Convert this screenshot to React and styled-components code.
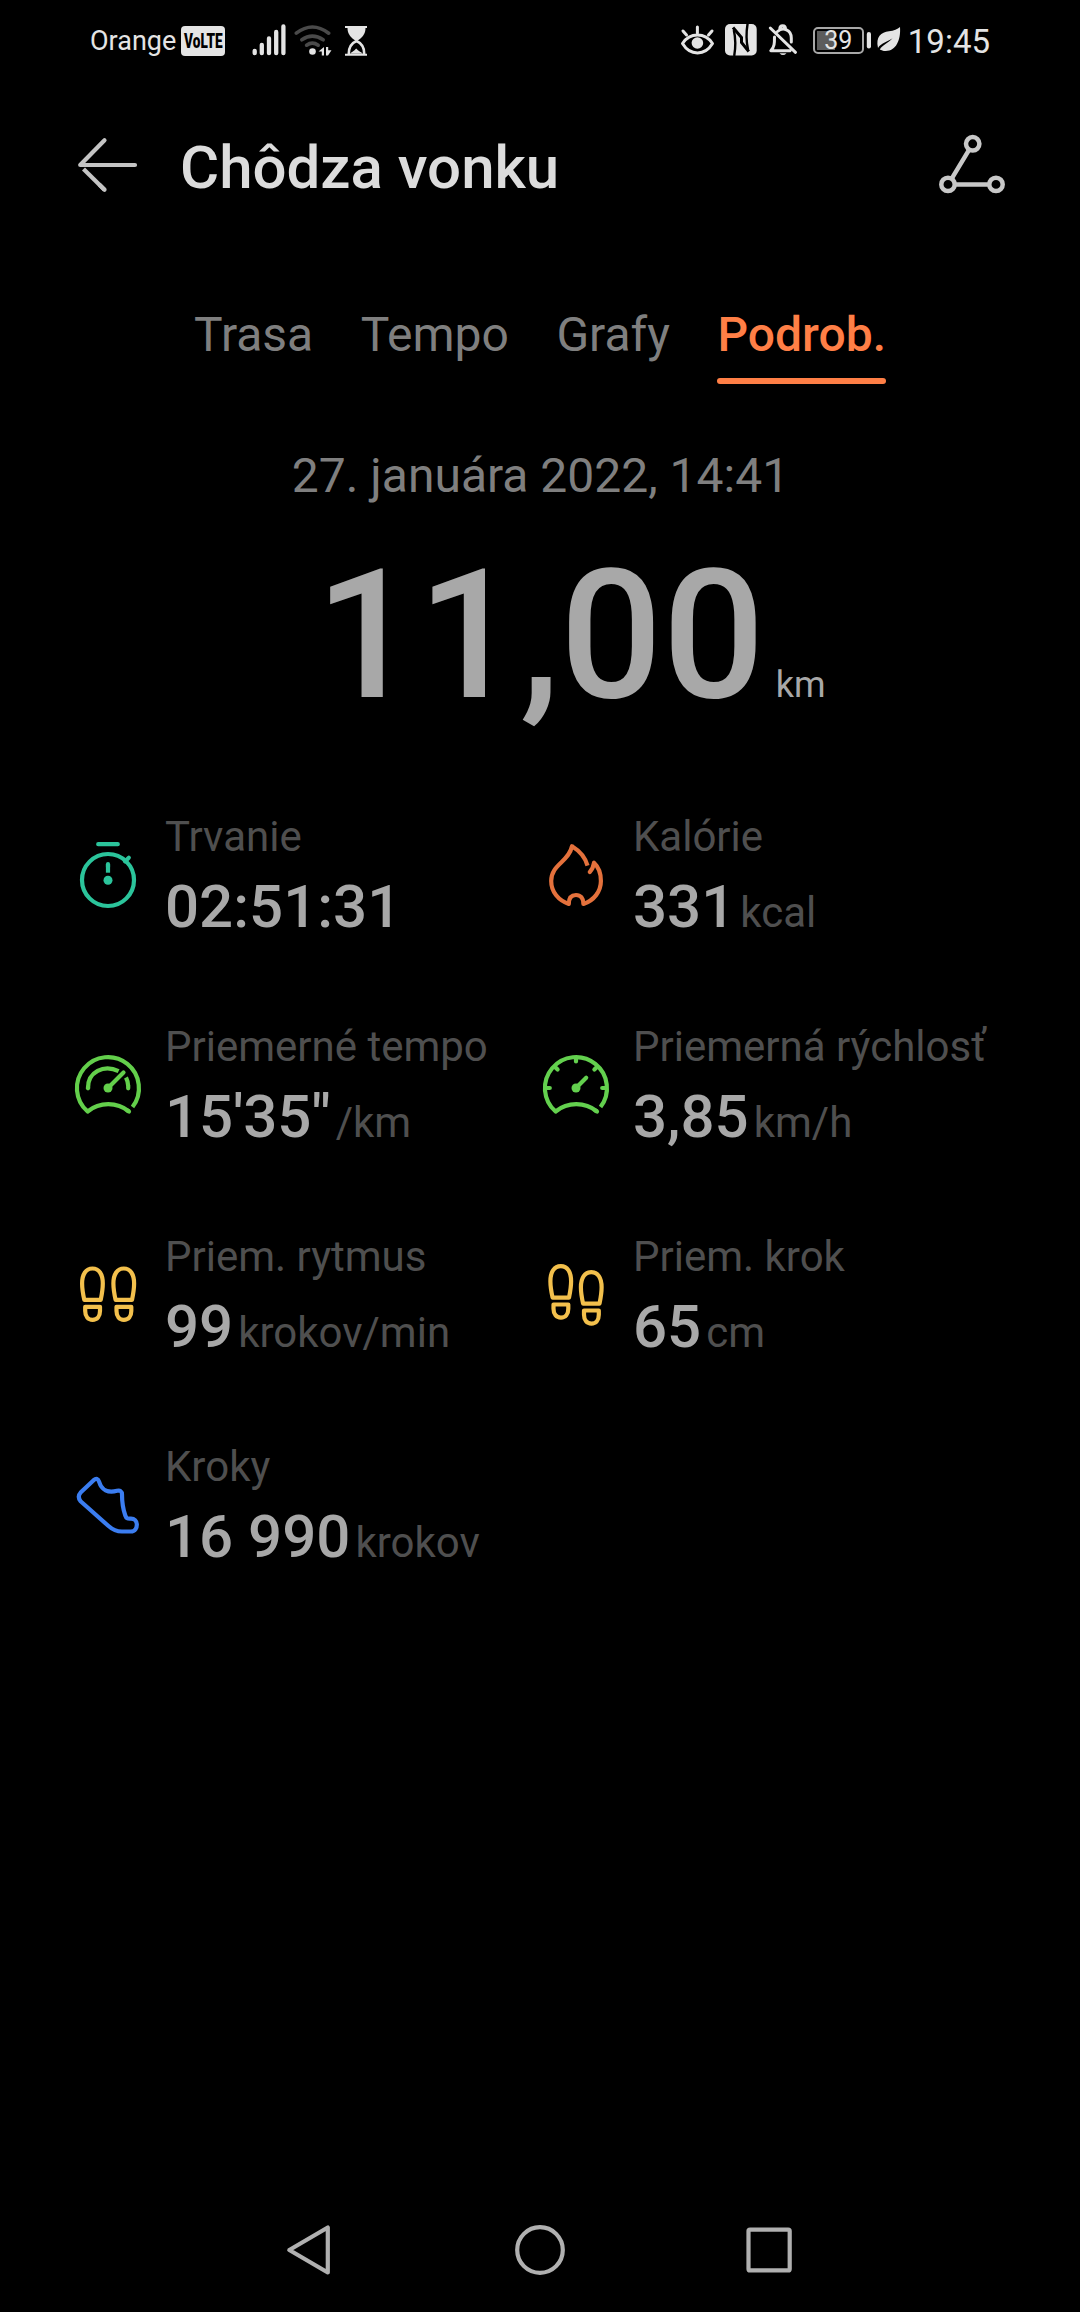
import React from 'react';
import styled, { createGlobalStyle } from 'styled-components';

const GlobalStyle = createGlobalStyle`
  * { box-sizing: border-box; }
  body {
    margin: 0;
    background: #000;
    font-family: Roboto, sans-serif;
  }
  svg { display: block; flex: none; }
`;

const Screen = styled.div`
  display: flex;
  flex-direction: column;
  width: 1080px;
  min-height: 2312px;
  background: #000;
`;

const StatusBar = styled.div`
  display: flex;
  align-items: center;
  justify-content: space-between;
  height: 80px;
  padding: 0 90px;
  color: #e4e4e4;
`;

const StatusGroup = styled.div`
  display: flex;
  align-items: center;
`;

const Carrier = styled.span`
  font-size: 27px;
  line-height: 42px;
  padding-top: 2px;
  width: 91px;
  white-space: nowrap;
`;

const VolteBadge = styled.span`
  display: flex;
  align-items: center;
  justify-content: center;
  width: 44px;
  height: 30px;
  margin-top: 2px;
  margin-right: 23px;
  border-radius: 4px;
  background: #e4e4e4;
`;

const VolteText = styled.span`
  color: #000;
  font-size: 20px;
  font-weight: 900;
  line-height: 30px;
  transform: scaleX(0.68);
`;

const Battery = styled.div`
  display: flex;
  align-items: center;
  justify-content: center;
  width: 51px;
  height: 27px;
  margin-left: 4px;
  border: 2px solid #a8a8a8;
  border-radius: 5px;
  background: linear-gradient(#5c5c5c, #5c5c5c) 2px 2px / 18px 19px no-repeat;
  font-size: 25px;
  line-height: 27px;
`;

const Clock = styled.span`
  font-size: 33px;
  line-height: 40px;
  padding-top: 3px;
  margin-left: 7px;
`;

const Header = styled.header`
  display: flex;
  align-items: center;
  height: 176px;
  padding: 0 72px;
`;

const Title = styled.h1`
  flex: 1;
  margin: 0 0 0 36px;
  font-size: 60px;
  font-weight: 500;
  line-height: 72px;
  color: #dcdcdc;
`;

const Tabs = styled.nav`
  display: flex;
  justify-content: center;
  gap: 47.5px;
  padding-top: 51px;
`;

const Tab = styled.div`
  font-size: 48px;
  line-height: 56px;
  font-weight: ${props => props.$active ? 500 : 400};
  color: ${props => props.$active ? '#ff7f46' : '#7f7f7f'};

  &::after {
    content: '';
    display: block;
    height: 6px;
    margin-top: 15px;
    border-radius: 3px;
    background: ${props => props.$active ? '#ff7f46' : 'transparent'};
  }
`;

const StartDate = styled.div`
  margin-top: 64px;
  padding-left: 1px;
  text-align: center;
  font-size: 48px;
  line-height: 56px;
  color: #7f7f7f;
`;

const Distance = styled.div`
  display: grid;
  grid-template-columns: 1fr auto 1fr;
  align-items: baseline;
  margin-top: 32px;
  color: #a8a8a8;
`;

const DistanceValue = styled.div`
  grid-column: 2;
  font-size: 180px;
  font-weight: 500;
  line-height: 200px;
`;

const DistanceUnit = styled.div`
  padding-left: 11px;
  font-size: 36px;
`;

const StatGrid = styled.div`
  display: grid;
  grid-template-columns: 468px 468px;
  grid-auto-rows: 210px;
  margin-top: 35px;
  padding-left: 72px;
`;

const StatItem = styled.div`
  display: flex;
  align-items: center;
  gap: 21px;
`;

const StatText = styled.div`
  padding-top: 2px;
`;

const StatLabel = styled.div`
  font-size: 42px;
  line-height: 50px;
  color: #4f4f4f;
  white-space: nowrap;
`;

const StatValue = styled.div`
  display: flex;
  align-items: baseline;
  height: 70px;
  margin-top: 10px;
  font-size: 60px;
  font-weight: 500;
  line-height: 70px;
  color: #a8a8a8;
  white-space: nowrap;
`;

const StatUnit = styled.span`
  margin-left: 5px;
  font-size: 42px;
  font-weight: 400;
  line-height: 42px;
  color: #4f4f4f;
`;

const NavBar = styled.nav`
  display: flex;
  align-items: center;
  justify-content: center;
  gap: 170px;
  height: 124px;
  margin-top: auto;
`;

const StatSvg = ({ color, children }) => (
  <svg
    width="72" height="72" viewBox="0 0 72 72" fill="none"
    stroke={ color } strokeWidth="4.2" strokeLinecap="round" strokeLinejoin="round"
  >
    { children }
  </svg>
);

const StopwatchIcon = () => (
  <StatSvg color="#2bc49b">
    <circle cx="36" cy="40" r="26" />
    <path d="M26.2 4.2H45.8M53 21.4l3.8-3.6" />
    <path d="M36 24.2V27" />
    <path d="M36 25v7.7" strokeLinecap="butt" />
    <circle cx="36" cy="40.2" r="4.5" fill="#2bc49b" stroke="none" />
  </StatSvg>
);

const FlameIcon = () => (
  <StatSvg color="#e4713c">
    <path d="M32 6.2C29 22 11.2 24 11.2 41C11.2 52 18.5 60.5 28.8 63.9C28.8 58 31.5 55 36 55C40.5 55 43.4 58 43.4 63.9C54 60.5 60.9 51.5 60.9 41C60.9 33.5 58.5 27 54 22.8C53.5 26.5 52.2 29.5 49.8 31.9" />
    <path d="M32 6.2C39 10.5 45 16 47.5 25.6" strokeLinecap="butt" />
  </StatSvg>
);

const PaceIcon = () => (
  <StatSvg color="#63cf4b">
    <path d="M60.5 57A31 31 0 1 0 15.6 61.5A33 33 0 0 1 57 61.5" strokeLinecap="butt" />
    <path d="M55 60.2L57 61.5" />
    <path d="M16 38.5C15.5 22 32 14 46.6 21.2" strokeLinecap="butt" />
    <path d="M16 37V38.3" />
    <path d="M54 27.5Q56.2 32 56.2 36" strokeLinecap="butt" />
    <path d="M56.2 36V38.3M36 38L51.5 22.6" />
    <circle cx="36" cy="38" r="4.5" fill="#63cf4b" stroke="none" />
  </StatSvg>
);

const SpeedIcon = () => (
  <StatSvg color="#63d04e">
    <path d="M60.5 57A31 31 0 1 0 15.6 61.5A33 33 0 0 1 57 61.5" strokeLinecap="butt" />
    <path d="M55 60.2L57 61.5" />
    <path d="M36 8V11.5M6 38H9.8M62.2 38H66M15.5 17.5L17.6 19.6M56.5 17.5L54.4 19.6M36 38L46.2 27.8" />
    <circle cx="36" cy="38" r="4.5" fill="#63d04e" stroke="none" />
  </StatSvg>
);

const Footprint = () => (
  <>
    <path d="M12.3 39.9C11.2 35 10.1 30 10.1 23.5C10.1 14 14 8.5 20.5 8.5S30.8 14 30.8 23.5C30.8 30 29.7 35 28.7 39.9Z" />
    <path d="M13.2 46.8H28V51C28 56.5 25.2 59.9 20.6 59.9S13.2 56.5 13.2 51Z" />
  </>
);

const CadenceIcon = () => (
  <StatSvg color="#f3c04c">
    <Footprint />
    <g transform="translate(31.3 0)"><Footprint /></g>
  </StatSvg>
);

const StrideIcon = () => (
  <StatSvg color="#f3c04c">
    <g transform="translate(0.3 -2.3)"><Footprint /></g>
    <g transform="translate(30.8 3.7)"><Footprint /></g>
  </StatSvg>
);

const ShoeIcon = () => (
  <StatSvg color="#3b7df0">
    <path d="M21.6 10.2L8.6 22.6Q5 26.5 8.6 31.2L36.5 56Q42.5 61.5 50 61.5H58.5C63.5 61.5 65 57.5 64.8 54C64.6 51 62.5 48.6 59 48.6C55.5 48.6 54.5 49 53.3 45.5C51 39 50 32 50 24.5C50 21.2 48 20 45 20.8C36 23.2 29.5 20 27.2 12Q25.6 7 21.6 10.2Z" />
  </StatSvg>
);

const stats = [
  { label: 'Trvanie', value: '02:51:31', Icon: StopwatchIcon },
  { label: 'Kalórie', value: '331', unit: 'kcal', Icon: FlameIcon },
  { label: 'Priemerné tempo', value: '15\'35"', unit: '/km', Icon: PaceIcon },
  { label: 'Priemerná rýchlosť', value: '3,85', unit: 'km/h', Icon: SpeedIcon },
  { label: 'Priem. rytmus', value: '99', unit: 'krokov/min', Icon: CadenceIcon },
  { label: 'Priem. krok', value: '65', unit: 'cm', Icon: StrideIcon },
  { label: 'Kroky', value: '16 990', unit: 'krokov', Icon: ShoeIcon }
];

const tabs = ['Trasa', 'Tempo', 'Grafy', 'Podrob.'];

// signal strength, wifi, hourglass
const SignalIcons = () => (
  <svg width="120" height="40" viewBox="248 20 120 40" fill="none" stroke="#e4e4e4" strokeLinecap="round">
    <path
      strokeWidth="4.3"
      d="M254.7 50.8V53.2M261.8 44.8V53.2M269 38.5V53.2M276.2 32V53.2M283.4 26.5V53.2"
    />
    <g stroke="#4a4a4a" strokeWidth="3.6">
      <path d="M296.3 33.2Q312.3 20.8 328.7 33.2" />
      <path d="M301.8 39.8Q312.3 32.5 323.2 39.8" />
      <path d="M306.6 45.2Q312.3 41.2 318.2 45.2" />
    </g>
    <g fill="#e4e4e4" stroke="none">
      <circle cx="312.5" cy="51.5" r="3.3" />
      <path d="M318.5 51.6L324 47V55.5H321.8V51.6ZM326 47H328.2V50.2H331.5L328 55.5H326Z" />
      <path d="M345 26H367V28H345ZM345 53.8H367V55.8H345Z" />
      <path d="M347.5 28H365.5C365.5 34 362 38.5 356.5 41C351 38.5 347.5 34 347.5 28Z" />
      <path d="M350 53.8C351.5 52 354 51 356.2 48.5C358.5 51 361 52 363 53.8Z" />
    </g>
    <path d="M348.8 53.5C348.8 46 352 43 356.5 41C361 43 364.2 46 364.2 53.5" strokeWidth="2.6" />
  </svg>
);

// eye comfort, NFC, muted bell
const AlertIcons = () => (
  <svg width="130" height="40" viewBox="679 20 130 40" fill="none" stroke="#e4e4e4" strokeLinecap="round" strokeLinejoin="round">
    <path d="M682.5 43.5C690 32.3 705 32.3 712.5 43.5C705 56 690 56 682.5 43.5Z" strokeWidth="3" />
    <path d="M697.4 27V33M683 31L686.5 35M712 31L708.5 35" strokeWidth="3" />
    <circle cx="697.4" cy="43" r="5.8" fill="#e4e4e4" stroke="none" />
    <rect x="725" y="24" width="31.7" height="31.5" rx="5" fill="#e4e4e4" stroke="none" />
    <g stroke="#000" strokeLinecap="butt">
      <path d="M734.2 56C735.6 48 735.6 38 733.8 30M747.6 23.500C746.200 32 746.200 41.500 748 49.500" strokeWidth="2.4" />
      <path d="M733 27.500L741.500 37.500V42.500L748.800 51.500" strokeWidth="3" strokeLinejoin="miter" />
    </g>
    <path
      d="M774.5 37C774.5 43 774.5 47 770.8 50.8H790M777.5 31.5C783 26.5 791.3 30 791.3 38V42M779.8 29C779.8 24.5 785.5 24.5 785.5 29M770.3 28L795.5 52.3"
      strokeWidth="3"
    />
    <path d="M779.5 53.2H786.5Q783 57 779.5 53.2Z" fill="#e4e4e4" stroke="none" />
  </svg>
);

const BatteryTipAndLeaf = () => (
  <svg width="37" height="40" viewBox="864 20 37 40">
    <path d="M868.9 34V46.5" stroke="#e4e4e4" strokeWidth="4.2" strokeLinecap="round" />
    <path
      d="M900 27C901 40 896 51.2 885.5 51C883 51 881.5 50.300 879.8 49.500C882.500 44.800 888 43.500 892.500 38.300C887.500 42 881.500 42.500 878 48C875.500 36.500 881 32.500 889 31.300C894 30.500 897.5 29.500 900 27Z"
      fill="#e4e4e4"
    />
  </svg>
);

const BackIcon = () => (
  <svg width="72" height="72" viewBox="72 132 72 72" fill="none" stroke="#c4c4c4" strokeWidth="4.2" strokeLinecap="round">
    <path d="M135 165H80.2L104.5 140.2" strokeLinejoin="round" />
    <path d="M104.5 189.8L83.5 169" strokeLinecap="butt" />
    <path d="M104.5 189.8L100 185.3" />
  </svg>
);

const RouteIcon = () => (
  <svg width="72" height="72" viewBox="936 132 72 72" fill="none" stroke="#c8c8c8" strokeWidth="4.5">
    <circle cx="972.7" cy="143.8" r="6.7" />
    <circle cx="948" cy="184.4" r="6.7" />
    <circle cx="996" cy="184.4" r="6.7" />
    <path d="M969.2 149.6L951.7 178.6M954.7 184.4H989.3" />
  </svg>
);

const NavIcon = ({ x, children }) => (
  <svg
    width="60" height="60" viewBox={ `${x} 2220 60 60` }
    fill="none" stroke="#b0b0b0" strokeWidth="4.2" strokeLinejoin="round"
  >
    { children }
  </svg>
);

const Stat = ({ label, value, unit, Icon }) => (
  <StatItem>
    <Icon />
    <StatText>
      <StatLabel>{ label }</StatLabel>
      <StatValue>
        { value }
        { unit && <StatUnit>{ unit }</StatUnit> }
      </StatValue>
    </StatText>
  </StatItem>
);

const App = () => (
  <>
    <GlobalStyle />
    <Screen>
      <StatusBar>
        <StatusGroup>
          <Carrier>Orange</Carrier>
          <VolteBadge><VolteText>VoLTE</VolteText></VolteBadge>
          <SignalIcons />
        </StatusGroup>
        <StatusGroup>
          <AlertIcons />
          <Battery>39</Battery>
          <BatteryTipAndLeaf />
          <Clock>19:45</Clock>
        </StatusGroup>
      </StatusBar>

      <Header>
        <BackIcon />
        <Title>Chôdza vonku</Title>
        <RouteIcon />
      </Header>

      <Tabs>
        { tabs.map(tab => (
          <Tab key={ tab } $active={ tab === 'Podrob.' }>{ tab }</Tab>
        )) }
      </Tabs>

      <StartDate>27. januára 2022, 14:41</StartDate>
      <Distance>
        <DistanceValue>11,00</DistanceValue>
        <DistanceUnit>km</DistanceUnit>
      </Distance>

      <StatGrid>
        { stats.map(stat => <Stat key={ stat.label } { ...stat } />) }
      </StatGrid>

      <NavBar>
        <NavIcon x={ 280 }>
          <path d="M327.8 2227.5V2272.5L289.3 2250Z" />
        </NavIcon>
        <NavIcon x={ 510 }>
          <circle cx="540" cy="2250" r="22.8" />
        </NavIcon>
        <NavIcon x={ 740 }>
          <rect x="748.5" y="2229.6" width="41.2" height="40.8" rx="1.5" />
        </NavIcon>
      </NavBar>
    </Screen>
  </>
);

export default App;
